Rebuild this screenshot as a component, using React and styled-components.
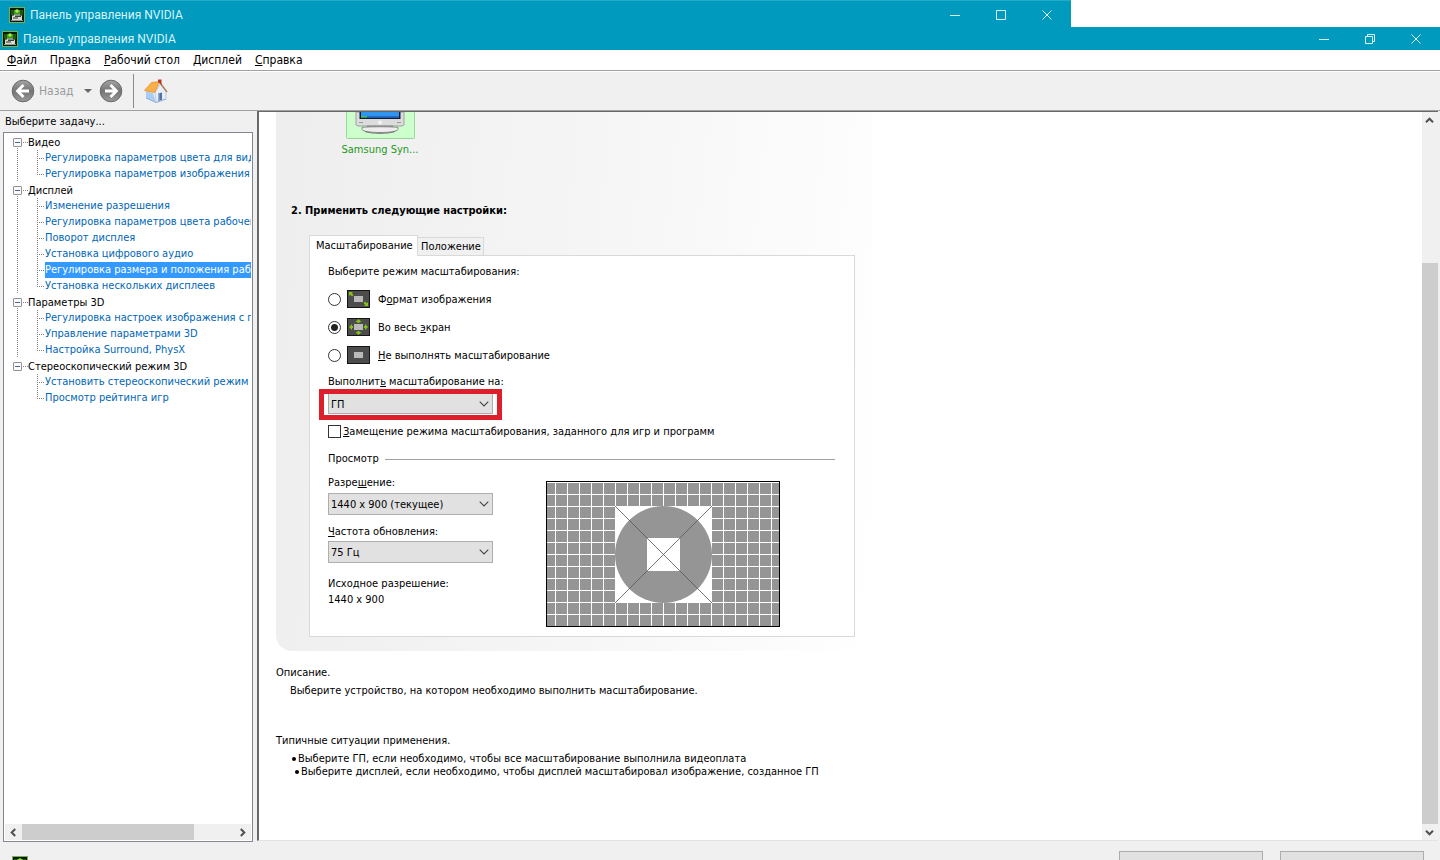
import React, { useState } from "react";
import styled, { createGlobalStyle, css } from "styled-components";

const TAHOMA = `Tahoma, "DejaVu Sans Condensed", "DejaVu Sans", sans-serif`;
const SEGOE = `"Segoe UI", Roboto, "Noto Sans", sans-serif`;

const GlobalStyle = createGlobalStyle`
  * { box-sizing: border-box; }
  html, body, #root { height: 100%; }
  body {
    margin: 0;
    overflow: hidden;
    background: #ffffff;
    color: #000000;
    font-family: ${TAHOMA};
    font-size: 11px;
    line-height: 16px;
  }
  button, select, input { font: inherit; color: inherit; margin: 0; }
  ul { list-style: none; margin: 0; padding: 0; }
  p, h1, h2, h3 { margin: 0; font-size: inherit; font-weight: inherit; }
`;

const Screen = styled.div`
  display: flex;
  flex-direction: column;
  height: 100vh;
  overflow: hidden;
  background: #f0f0f0;
`;

const TitleStrip = styled.div`
  flex: none;
  background: #ffffff;
`;

const TitleBar = styled.header`
  display: flex;
  align-items: center;
  gap: 5px;
  background: #009abe;
  color: #d8f4fa;
  font-family: ${SEGOE};
  font-size: 12px;
  ${(p) =>
    p.$back
      ? css`
          width: 74.4%;
          height: 27px;
          padding: 2px 0 0 9px;
          border-top: 1px solid #27a9c8;
        `
      : css`
          height: 23px;
          padding-left: 2px;
        `}
`;

const TitleText = styled.h1`
  flex: 1;
  line-height: 16px;
  white-space: nowrap;
`;

const CaptionButtons = styled.div`
  display: flex;
  padding-right: 1px;
`;

const CaptionButton = styled.button`
  width: 46px;
  height: 20px;
  padding: 0;
  border: 0;
  background: none;
  display: grid;
  place-items: center;
  color: #d8f4fa;
`;

const MenuBar = styled.nav`
  flex: none;
  display: flex;
  gap: 13px;
  height: 20px;
  padding: 0 7px;
  align-items: center;
  background: #ffffff;
`;

const MenuItem = styled.button`
  padding: 0;
  border: 0;
  background: none;
  font-size: 12px;
  line-height: 16px;
`;

const Toolbar = styled.div`
  flex: none;
  display: flex;
  align-items: center;
  height: 41px;
  padding: 1px 11px 0;
  border-top: 1px solid #a0a0a0;
  border-bottom: 1px solid #a0a0a0;
  box-shadow: inset 0 1px 0 #ffffff;
`;

const ToolButton = styled.button`
  display: flex;
  align-items: center;
  gap: 4px;
  padding: 0;
  border: 0;
  background: none;
  color: #9b9b9b;
  font-size: 12px;
`;

const ToolDivider = styled.span`
  width: 1px;
  height: 34px;
  margin: 0 10px;
  background: #8c8c8c;
`;

const DropArrow = styled.span`
  margin: 0 7px 0 10px;
  border: 4px solid transparent;
  border-top-color: #666666;
  border-bottom: 0;
`;

const Workspace = styled.main`
  flex: 1;
  min-height: 0;
  display: flex;
`;

const TaskPane = styled.aside`
  flex: none;
  width: 257px;
  display: flex;
  flex-direction: column;
  padding: 3px 4px 0 3px;
`;

const TaskLabel = styled.h2`
  height: 18px;
  padding-left: 2px;
`;

const TreeBox = styled.div`
  flex: 1;
  min-height: 0;
  display: flex;
  flex-direction: column;
  border: 1px solid #828790;
  padding: 1px;
  background: #ffffff;
`;

const Tree = styled.ul`
  flex: 1;
  min-height: 0;
  overflow: hidden;
  padding-left: 8px;
`;

const dotsV = "repeating-linear-gradient(180deg, #808080 0 1px, transparent 1px 2px)";
const dotsH = "repeating-linear-gradient(90deg, #808080 0 1px, transparent 1px 2px)";

const Branch = styled.li`
  background: ${dotsV} 4px 8px / 1px ${(p) => (p.$last ? "0" : "100%")} no-repeat;
`;

const BranchHead = styled.div`
  display: flex;
  align-items: center;
  gap: 6px;
  height: 16px;
  padding-top: 2px;
  white-space: nowrap;
  background: ${dotsH} 10px 8px / 5px 1px no-repeat;
`;

const Expander = styled.button`
  width: 9px;
  height: 9px;
  margin-bottom: 2px;
  padding: 0;
  border: 1px solid #919191;
  border-radius: 1px;
  background: linear-gradient(#4b63a7, #4b63a7) center / 5px 1px no-repeat #fafafa;
`;

const Leaf = styled.li`
  display: flex;
  height: 16px;
  margin-left: 24px;
  padding-left: 8px;
  white-space: nowrap;
  background:
    ${dotsV} 0 0 / 1px ${(p) => (p.$last ? "9px" : "100%")} no-repeat,
    ${dotsH} 0 8px / 8px 1px no-repeat;
`;

const LeafLink = styled.a`
  flex: 1;
  line-height: 15px;
  overflow: hidden;
  text-decoration: none;
  color: ${(p) => (p.$active ? "#ffffff" : "#0066b8")};
  background: ${(p) => (p.$active ? "#3399ff" : "transparent")};
`;

const ScrollTrack = styled.div`
  flex: none;
  display: flex;
  flex-direction: ${(p) => (p.$vertical ? "column" : "row")};
  ${(p) => (p.$vertical ? "width: 16px" : "height: 16px")};
  background: #f0f0f0;
`;

const ScrollButton = styled.button`
  flex: none;
  width: ${(p) => (p.$vertical ? "15px" : "17px")};
  height: 16px;
  padding: 0;
  border: 0;
  background: none;
  display: grid;
  place-items: center;
`;

const ScrollRun = styled.div`
  flex: 1;
  display: flex;
  flex-direction: ${(p) => (p.$vertical ? "column" : "row")};
`;

const ScrollGap = styled.span`
  flex: ${(p) => p.$share} 0 0;
`;

const ScrollThumb = styled.span`
  flex: ${(p) => p.$share} 0 0;
  background: #cdcdcd;
`;

const ContentFrame = styled.section`
  flex: 1;
  min-width: 0;
  display: flex;
  margin: 0 2px 1px 0;
  border-left: 2px solid #696969;
  border-top: 1px solid #696969;
  border-bottom: 1px solid #e3e3e3;
  background: #ffffff;
`;

const Content = styled.div`
  flex: 1;
  min-width: 0;
  overflow: hidden;
  padding-left: 17px;
`;

const SettingsPanel = styled.div`
  width: 596px;
  max-width: 100%;
  padding: 0 17px 14px 15px;
  border-bottom-left-radius: 16px;
  background: linear-gradient(96deg, #eeeeee 0%, #f2f2f2 30%, #f8f8f8 65%, #ffffff 100%);
`;

const DisplayTile = styled.figure`
  display: flex;
  flex-direction: column;
  align-items: center;
  gap: 3px;
  width: 80px;
  margin: 0 0 0 49px;
  color: #1a9a1a;
`;

const DisplayThumb = styled.div`
  width: 69px;
  height: 27px;
  display: flex;
  justify-content: center;
  border: 1px solid #98d898;
  border-top: 0;
  border-radius: 0 0 2px 2px;
  background: #ccffcc;
`;

const StepHeading = styled.h2`
  margin-top: 45px;
  font-weight: bold;
`;

const TabBlock = styled.div`
  margin: 16px 0 0 18px;
`;

const TabList = styled.div`
  display: flex;
  align-items: flex-end;
`;

const Tab = styled.button`
  padding: 0 ${(p) => (p.$active ? "6px" : "3px")};
  width: ${(p) => (p.$active ? "109px" : "66px")};
  height: ${(p) => (p.$active ? "21px" : "18px")};
  margin-bottom: ${(p) => (p.$active ? "-1px" : "0")};
  border: 1px solid #d9d9d9;
  border-bottom: 0;
  border-left-width: ${(p) => (p.$active ? "1px" : "0")};
  background: ${(p) => (p.$active ? "#ffffff" : "#f0f0f0")};
  line-height: 16px;
  text-align: left;
  white-space: nowrap;
`;

const TabPanel = styled.div`
  padding: 8px 19px 9px 18px;
  border: 1px solid #d9d9d9;
  background: #ffffff;
`;

const ModeGroup = styled.fieldset`
  margin: 0;
  padding: 0;
  border: 0;
`;

const ModeLegend = styled.legend`
  padding: 0;
  margin-bottom: 5px;
`;

const ModeRow = styled.label`
  display: flex;
  align-items: center;
  height: 28px;
`;

const OptionText = styled.span`
  padding-top: 2px;
  white-space: nowrap;
`;

const Radio = styled.input`
  appearance: none;
  width: 13px;
  height: 13px;
  border: 1px solid #333333;
  border-radius: 50%;
  background: #ffffff;
  &:checked {
    background: radial-gradient(circle, #222222 0 3px, #ffffff 4px);
  }
`;

const ModeIcon = styled.svg`
  margin: 0 8px 0 6px;
`;

const FieldLabel = styled.label`
  display: block;
  margin-top: ${(p) => p.$gap || 0}px;
`;

const Highlight = styled.div`
  width: 183px;
  margin: -1px 0 0 -9px;
  padding: 0 4px 1px;
  border: 5px solid #dc1f2b;
`;

const SelectWrap = styled.div`
  position: relative;
  width: 165px;
  margin-top: ${(p) => p.$gap || 0}px;
`;

const Select = styled.select`
  appearance: none;
  display: block;
  width: 100%;
  height: ${(p) => (p.$flat ? "20px" : "22px")};
  padding: 2px 20px 0 2px;
  border: 1px solid #adadad;
  border-top-width: ${(p) => (p.$flat ? "0" : "1px")};
  border-radius: 0;
  background: #e1e1e1;
`;

const SelectArrow = styled.svg`
  position: absolute;
  right: 4px;
  top: 50%;
  margin-top: -3px;
  pointer-events: none;
`;

const CheckRow = styled.label`
  display: flex;
  align-items: center;
  gap: 2px;
  height: 16px;
  margin-top: 3px;
`;

const CheckBox = styled.input`
  appearance: none;
  width: 13px;
  height: 13px;
  border: 1px solid #333333;
  background: #ffffff;
  &:checked { box-shadow: inset 0 0 0 3px #ffffff; background: #333333; }
`;

const SectionTitle = styled.h3`
  display: flex;
  align-items: center;
  gap: 6px;
  margin-top: 12px;
  &::after {
    content: "";
    flex: 1;
    height: 1px;
    background: #a0a0a0;
  }
`;

const PreviewGrid = styled.div`
  display: grid;
  grid-template-columns: 218px auto;
  justify-content: start;
  padding-top: 8px;
`;

const PreviewChart = styled.svg`
  display: block;
  margin-top: 6px;
`;

const Help = styled.div`
  padding-top: 14px;
`;

const HelpText = styled.p`
  margin: 2px 0 0 14px;
`;

const HelpTitle = styled.h2`
  margin-top: ${(p) => p.$gap || 0}px;
`;

const UseCases = styled.ul`
  margin: 3px 0 0 16px;
  line-height: 13px;
`;

const UseCase = styled.li`
  display: flex;
  align-items: center;
  gap: 2px;
  margin-left: ${(p) => (p.$nested ? "3px" : "0")};
  &::before {
    content: "";
    width: 4px;
    height: 4px;
    border-radius: 50%;
    background: #000000;
  }
`;

const Footer = styled.footer`
  flex: none;
  display: flex;
  justify-content: flex-end;
  align-items: flex-start;
  gap: 17px;
  height: 18px;
  padding: 9px 16px 0 12px;
  overflow: hidden;
`;

const FooterIcon = styled.div`
  margin: 5px auto 0 0;
`;

const FooterButton = styled.button`
  width: 144px;
  height: 24px;
  border: 1px solid #adadad;
  background: #e1e1e1;
`;

function AppIcon() {
  return (
    <svg width="16" height="16" viewBox="0 0 16 16" aria-hidden="true">
      <rect x="0.5" y="0.5" width="15" height="15" fill="#0b1a08" stroke="#7fae4e" />
      <path d="M2 3h12v5H2z" fill="#1c5a12" />
      <path d="M5 3h6v4H5z" fill="#3c9a1c" />
      <circle cx="8" cy="4" r="1.800" fill="#a4f03a" />
      <path d="M3 8.500h2v-1h6v1h2V13H3z" fill="#d6dad2" />
      <path d="M6 8.500h6v1.500H6z" fill="#3a4438" />
      <path d="M4 10.500h5v1H4z" fill="#2c352b" />
      <path d="M2 13h12v1H2z" fill="#8f968c" />
    </svg>
  );
}

function CaptionIcon({ kind }) {
  const shapes = {
    min: <path d="M0 5.5h10" />,
    max: <path d="M0.5 0.5h9v9h-9z" />,
    restore: <path d="M0.5 2.5h7v7h-7zM2.5 2.5v-2h7v7h-2" />,
    close: <path d="M0.5 0.5l9 9M9.5 0.5l-9 9" />,
  };
  return (
    <svg width="10" height="10" viewBox="0 0 10 10" fill="none" stroke="currentColor" aria-hidden="true">
      {shapes[kind]}
    </svg>
  );
}

function RoundArrow({ flip }) {
  const id = flip ? "discR" : "discL";
  return (
    <svg width="24" height="24" viewBox="0 0 24 24" aria-hidden="true">
      <defs>
        <linearGradient id={id} x1="0" y1="0" x2="0" y2="1">
          <stop offset="0" stopColor="#a4a4a4" />
          <stop offset="0.5" stopColor="#747474" />
          <stop offset="1" stopColor="#9a9a9a" />
        </linearGradient>
      </defs>
      <circle cx="12" cy="12" r="10.8" fill={`url(#${id})`} stroke="#6a6a6a" />
      <g transform={flip ? "matrix(-1 0 0 1 24 0)" : undefined}>
        <path d="M12.5 6L6.5 12l6 6M7 12h11" fill="none" stroke="#ffffff" strokeWidth="2.8" />
      </g>
    </svg>
  );
}

function HomeIcon() {
  return (
    <svg width="24" height="24" viewBox="0 0 24 24" aria-hidden="true">
      <path d="M2 12l7 2 3 9.500L2 19z" fill="#a9cdf2" />
      <path d="M11 13l5-7.500 6 7V20l-10 3.500z" fill="#e6eefa" stroke="#9db9dc" strokeWidth="0.600" />
      <path d="M2 19l10 4.500L22 20" fill="none" stroke="#7fa6d4" strokeWidth="0.800" />
      <path d="M0.500 11.500L7.500 3.500 15.500 2.500 11 13.500z" fill="#f9b04a" stroke="#e8912c" strokeWidth="0.800" />
      <path d="M15.500 3l7.500 10" stroke="#b7794a" strokeWidth="1.300" />
      <path d="M14 0.500h3.500V6L14 3z" fill="#b23a2a" />
      <path d="M14 14.500l4-1v7.200l-4 1.300z" fill="#56719f" />
      <path d="M14 14.500l1.500-0.400v7.400l-1.500 0.500z" fill="#8fa9d0" />
    </svg>
  );
}

function MonitorArt() {
  return (
    <svg width="50" height="24" viewBox="0 0 50 24" aria-hidden="true">
      <path d="M1 0h48v13l-2 1H3l-2-1z" fill="#dcdcdc" stroke="#a0a0a0" />
      <path d="M4.500 0h41v7h-41z" fill="#101c38" />
      <path d="M6 0h38v5.500H6z" fill="#2f96f0" />
      <path d="M6 4h38v1.500H6z" fill="#2468c8" />
      <path d="M6 4h6v1.500H6z" fill="#3fc04a" />
      <path d="M4 10.500h4M42 10.500h4" stroke="#9a9a9a" />
      <circle cx="25" cy="10.500" r="2" fill="#f4f4f4" />
      <path d="M12 13.500h26v2H12z" fill="#8e8e8e" />
      <path d="M7 15.500c4-1 32-1 36 0v2c-2 4-34 4-36 0z" fill="#ededed" stroke="#8a8a8a" />
      <path d="M10 19.500c6 2.500 24 2.500 30 0" fill="none" stroke="#7a7a7a" />
    </svg>
  );
}

function ScalingIcon({ kind }) {
  return (
    <ModeIcon width="23" height="18" viewBox="0 0 23 18" aria-hidden="true">
      <rect x="0.5" y="0.5" width="22" height="17" fill="#4c4c4c" stroke="#141414" />
      <rect x="7" y="6" width="9" height="6" fill="#b9b9b9" />
      {kind === "aspect" && (
        <g fill="#83c313">
          <path d="M2 2h4L4.800 3.200 6.500 5 5 6.500 3.200 4.800 2 6z" />
          <path d="M21 16h-4l1.200-1.200L16.500 13l1.500-1.500 1.800 1.700L21 12z" />
        </g>
      )}
      {kind === "full" && (
        <g fill="#83c313">
          <path d="M11.500 1l3 3h-2v1h-2V4h-2z" />
          <path d="M11.500 17l3-3h-2v-1h-2v1h-2z" />
          <path d="M2 9l3-3v2h1v2H5v2z" />
          <path d="M21 9l-3-3v2h-1v2h1v2z" />
        </g>
      )}
    </ModeIcon>
  );
}

function Chevron({ dir }) {
  const turn = { up: 0, right: 90, down: 180, left: 270 }[dir];
  return (
    <svg width="9" height="9" viewBox="0 0 9 9" aria-hidden="true">
      <path
        d="M1 6.200l3.500-3.500L8 6.200"
        transform={`rotate(${turn} 4.500 4.500)`}
        fill="none"
        stroke="#505050"
        strokeWidth="2"
      />
    </svg>
  );
}

function TestPattern() {
  const cols = Array.from({ length: 19 }, (_, i) => 9 + i * 12);
  const rows = Array.from({ length: 12 }, (_, i) => 1 + i * 12);
  return (
    <PreviewChart width="234" height="146" viewBox="0 0 234 146" role="img" aria-label="Просмотр">
      <rect width="234" height="146" fill="#959595" />
      <g fill="#ffffff">
        {cols.map((x) => (
          <rect key={x} x={x} y="1" width="1" height="144" />
        ))}
        {rows.map((y) => (
          <rect key={y} x="1" y={y} width="232" height="1" />
        ))}
        <rect x="69" y="25" width="97" height="97" />
      </g>
      <circle cx="117.500" cy="73.500" r="48.500" fill="#959595" />
      <rect x="101" y="57" width="33" height="33" fill="#ffffff" />
      <path d="M69 25l97 97M166 25l-97 97" stroke="#555555" strokeWidth="0.800" />
      <rect x="0.5" y="0.5" width="233" height="145" fill="none" stroke="#000000" />
    </PreviewChart>
  );
}

function WindowTitle({ back }) {
  return (
    <TitleBar $back={back}>
      <AppIcon />
      <TitleText>Панель управления NVIDIA</TitleText>
      <CaptionButtons>
        <CaptionButton aria-label="Свернуть">
          <CaptionIcon kind="min" />
        </CaptionButton>
        <CaptionButton aria-label="Развернуть">
          <CaptionIcon kind={back ? "max" : "restore"} />
        </CaptionButton>
        <CaptionButton aria-label="Закрыть">
          <CaptionIcon kind="close" />
        </CaptionButton>
      </CaptionButtons>
    </TitleBar>
  );
}

function Dropdown({ id, options, flat, gap }) {
  return (
    <SelectWrap $gap={gap}>
      <Select id={id} $flat={flat}>
        {options.map((o) => (
          <option key={o}>{o}</option>
        ))}
      </Select>
      <SelectArrow width="10" height="6" viewBox="0 0 10 6" aria-hidden="true">
        <path d="M0.700 0.700L5 5l4.300-4.300" fill="none" stroke="#444444" strokeWidth="1.100" />
      </SelectArrow>
    </SelectWrap>
  );
}

const MENU = [
  ["", "Ф", "айл"],
  ["Пра", "в", "ка"],
  ["", "Р", "абочий стол"],
  ["", "Д", "исплей"],
  ["", "С", "правка"],
];

const TASKS = [
  {
    title: "Видео",
    items: ["Регулировка параметров цвета для видео", "Регулировка параметров изображения для видео"],
  },
  {
    title: "Дисплей",
    items: [
      "Изменение разрешения",
      "Регулировка параметров цвета рабочего стола",
      "Поворот дисплея",
      "Установка цифрового аудио",
      "Регулировка размера и положения рабочего стола",
      "Установка нескольких дисплеев",
    ],
  },
  {
    title: "Параметры 3D",
    items: [
      "Регулировка настроек изображения с просмотром",
      "Управление параметрами 3D",
      "Настройка Surround, PhysX",
    ],
  },
  {
    title: "Стереоскопический режим 3D",
    items: ["Установить стереоскопический режим 3D", "Просмотр рейтинга игр"],
  },
];

const MODES = [
  { id: "aspect", text: ["Ф", "о", "рмат изображения"] },
  { id: "full", text: ["Во весь ", "э", "кран"] },
  { id: "none", text: ["", "Н", "е выполнять масштабирование"] },
];

export default function App() {
  const [mode, setMode] = useState("full");
  const [task, setTask] = useState("Регулировка размера и положения рабочего стола");

  return (
    <Screen>
      <GlobalStyle />
      <TitleStrip>
        <WindowTitle back />
        <WindowTitle />
      </TitleStrip>
      <MenuBar>
        {MENU.map(([a, b, c]) => (
          <MenuItem key={a + b + c}>
            {a}
            <u>{b}</u>
            {c}
          </MenuItem>
        ))}
      </MenuBar>
      <Toolbar>
        <ToolButton>
          <RoundArrow />
          Назад
        </ToolButton>
        <DropArrow />
        <ToolButton aria-label="Вперед">
          <RoundArrow flip />
        </ToolButton>
        <ToolDivider />
        <ToolButton aria-label="Домой">
          <HomeIcon />
        </ToolButton>
      </Toolbar>
      <Workspace>
        <TaskPane>
          <TaskLabel>Выберите задачу...</TaskLabel>
          <TreeBox>
            <Tree>
              {TASKS.map((group, g) => (
                <Branch key={group.title} $last={g === TASKS.length - 1}>
                  <BranchHead>
                    <Expander aria-label={group.title} />
                    {group.title}
                  </BranchHead>
                  <ul>
                    {group.items.map((item, i) => (
                      <Leaf key={item} $last={i === group.items.length - 1}>
                        <LeafLink href="#" $active={item === task} onClick={() => setTask(item)}>
                          {item}
                        </LeafLink>
                      </Leaf>
                    ))}
                  </ul>
                </Branch>
              ))}
            </Tree>
            <ScrollTrack>
              <ScrollButton aria-label="Влево">
                <Chevron dir="left" />
              </ScrollButton>
              <ScrollRun>
                <ScrollThumb $share={172} />
                <ScrollGap $share={40} />
              </ScrollRun>
              <ScrollButton aria-label="Вправо">
                <Chevron dir="right" />
              </ScrollButton>
            </ScrollTrack>
          </TreeBox>
        </TaskPane>
        <ContentFrame>
          <Content>
            <SettingsPanel>
              <DisplayTile>
                <DisplayThumb>
                  <MonitorArt />
                </DisplayThumb>
                <figcaption>Samsung Syn...</figcaption>
              </DisplayTile>
              <StepHeading>2. Применить следующие настройки:</StepHeading>
              <TabBlock>
                <TabList role="tablist">
                  <Tab role="tab" aria-selected="true" $active>
                    Масштабирование
                  </Tab>
                  <Tab role="tab" aria-selected="false">
                    Положение
                  </Tab>
                </TabList>
                <TabPanel role="tabpanel">
                  <ModeGroup>
                    <ModeLegend>Выберите режим масштабирования:</ModeLegend>
                    {MODES.map(({ id, text }) => (
                      <ModeRow key={id}>
                        <Radio type="radio" name="mode" checked={mode === id} onChange={() => setMode(id)} />
                        <ScalingIcon kind={id} />
                        <OptionText>
                          {text[0]}
                          <u>{text[1]}</u>
                          {text[2]}
                        </OptionText>
                      </ModeRow>
                    ))}
                  </ModeGroup>
                  <FieldLabel htmlFor="device" $gap={5}>
                    Выполнит<u>ь</u> масштабирование на:
                  </FieldLabel>
                  <Highlight>
                    <Dropdown id="device" options={["ГП", "Дисплей"]} flat />
                  </Highlight>
                  <CheckRow>
                    <CheckBox type="checkbox" />
                    <OptionText>
                      <u>З</u>амещение режима масштабирования, заданного для игр и программ
                    </OptionText>
                  </CheckRow>
                  <SectionTitle>Просмотр</SectionTitle>
                  <PreviewGrid>
                    <div>
                      <FieldLabel htmlFor="resolution">
                        Разре<u>ш</u>ение:
                      </FieldLabel>
                      <Dropdown id="resolution" options={["1440 x 900 (текущее)"]} gap={2} />
                      <FieldLabel htmlFor="rate" $gap={9}>
                        <u>Ч</u>астота обновления:
                      </FieldLabel>
                      <Dropdown id="rate" options={["75 Гц"]} gap={1} />
                      <FieldLabel as="p" $gap={13}>
                        Исходное разрешение:
                      </FieldLabel>
                      <p>1440 x 900</p>
                    </div>
                    <TestPattern />
                  </PreviewGrid>
                </TabPanel>
              </TabBlock>
            </SettingsPanel>
            <Help>
              <HelpTitle>Описание.</HelpTitle>
              <HelpText>Выберите устройство, на котором необходимо выполнить масштабирование.</HelpText>
              <HelpTitle $gap={34}>Типичные ситуации применения.</HelpTitle>
              <UseCases>
                <UseCase>Выберите ГП, если необходимо, чтобы все масштабирование выполнила видеоплата</UseCase>
                <UseCase $nested>
                  Выберите дисплей, если необходимо, чтобы дисплей масштабировал изображение, созданное ГП
                </UseCase>
              </UseCases>
            </Help>
          </Content>
          <ScrollTrack $vertical>
            <ScrollButton $vertical aria-label="Вверх">
              <Chevron dir="up" />
            </ScrollButton>
            <ScrollRun $vertical>
              <ScrollGap $share={134} />
              <ScrollThumb $share={558} />
            </ScrollRun>
            <ScrollButton $vertical aria-label="Вниз">
              <Chevron dir="down" />
            </ScrollButton>
          </ScrollTrack>
        </ContentFrame>
      </Workspace>
      <Footer>
        <FooterIcon>
          <AppIcon />
        </FooterIcon>
        <FooterButton aria-label="Применить" />
        <FooterButton aria-label="Отмена" />
      </Footer>
    </Screen>
  );
}
